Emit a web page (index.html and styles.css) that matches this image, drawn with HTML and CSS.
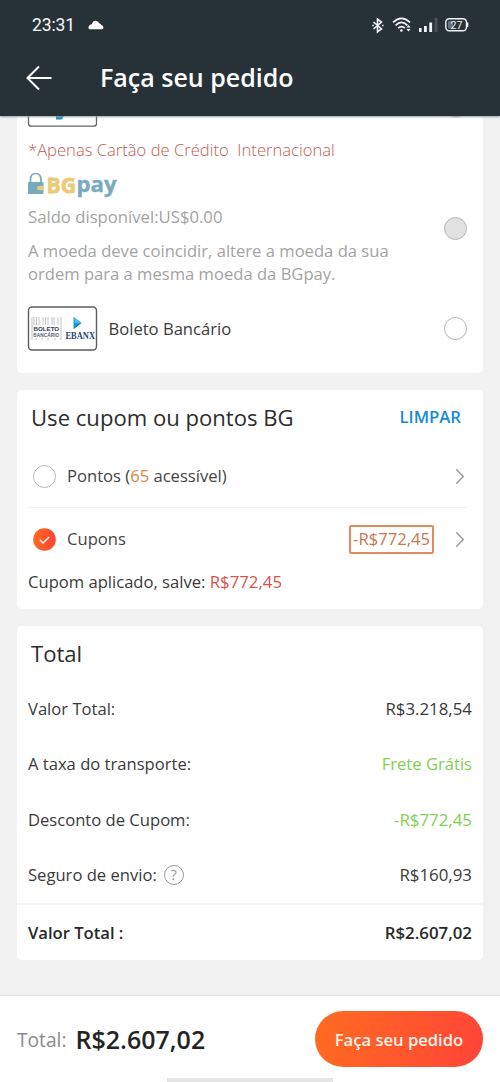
FILE: index.html
```html
<!DOCTYPE html>
<html lang="pt-BR">
<head>
<meta charset="utf-8">
<title>Faça seu pedido</title>
<link rel="stylesheet" href="styles.css">
</head>
<body>
<div class="screen">
  <header class="header">
    <div class="status">
      <span class="clock">23:31</span>
      <svg class="cloud" width="16" height="10" viewBox="0 0 16 10"><path fill="#fff" d="M2.500 9.300H14c2 0 2-3.500-.6-4.300C12.300 4 12 3.500 11 3 9 0 5 0 4 4 2.500 4.300.6 5.500.4 7.500c-.1 1.200.8 1.800 2.100 1.800z"/></svg>
      <div class="status-icons">
        <svg width="12" height="15" viewBox="0 0 12 15" fill="none" stroke="#f2f6f8" stroke-width="1.600"><path d="M1.500 4l8 7-4 3V1l4 3-8 7"/><path d="M.3 7.500h1.500M10 7.500h1.500" stroke-width="1.700"/></svg>
        <svg width="20" height="16" viewBox="0 0 20 16" fill="none" stroke="#f2f6f8" stroke-width="1.700"><path d="M1 5.400Q9.500-2.500 18 5.400M3.600 8.400Q9.500 2.500 15.400 8.400M6.200 11.200Q9.500 8 12.800 11.200"/><circle cx="9.400" cy="13.500" r="1.300" fill="#f2f6f8" stroke="none"/><path fill="#f2f6f8" stroke="none" d="M14.400 10.500L16.500 8l2.100 2.500zM14.400 12h4.200l-2.100 2.500z"/></svg>
        <svg width="19" height="15" viewBox="0 0 19 15" fill="#f2f6f8"><rect x="0" y="10" width="2.600" height="4"/><rect x="5" y="8" width="2.800" height="6"/><rect x="10.300" y="4.500" width="2.800" height="9.500"/><rect x="15.600" y="0" width="2.800" height="14" fill="#4a535a"/></svg>
        <svg width="24" height="14" viewBox="0 0 24 14"><rect x=".8" y=".8" width="20.700" height="12" rx="3.500" fill="none" stroke="#f2f6f8" stroke-width="1.400"/><rect x="3" y="3" width="5" height="7.700" rx="1.500" fill="#68737b"/><path d="M22.600 4.500v4.500" stroke="#f2f6f8" stroke-width="1.400"/><text x="11.400" y="10.600" text-anchor="middle" class="battery-text">27</text></svg>
      </div>
    </div>
    <div class="titlebar">
      <svg class="back" width="27" height="26" viewBox="0 0 27 26" fill="none" stroke="#fff" stroke-width="2"><path d="M25.500 13H2M13 1.500L1.500 13 13 24.500"/></svg>
      <h1>Faça seu pedido</h1>
    </div>
  </header>

  <main class="content">
    <section class="card payment">
      <svg class="clipped" width="439" height="11" viewBox="0 0 439 11"><path d="M.5 0v7.500q0 2.700 2.700 2.700h62.600q2.700 0 2.700-2.700V0" fill="#fff" stroke="#666" stroke-width="1.300"/><path d="M28 0h8l-2 3.500h-6z" fill="#158dc2"/><path d="M421 0q7 3.500 14 0z" fill="#e2bac1"/></svg>
      <p class="warning">*Apenas Cartão de Crédito&nbsp; Internacional</p>
      <div class="bgpay">
        <div class="bgpay-info">
          <svg class="bgpay-logo" width="92" height="25" viewBox="0 0 92 25"><path d="M2.500 12V8.500q0-6 5.200-6t5.200 6V12" fill="none" stroke="#77aabd" stroke-width="1.700"/><rect x="0" y="11" width="15.500" height="12" rx="1" fill="#77aabd"/><path d="M9 17q0-2 2-2h4.500v4.200H11q-2 0-2-2.200z" fill="#e9cc75"/><text x="18.500" y="22" class="logo-bg" textLength="29.500" lengthAdjust="spacingAndGlyphs">BG</text><text x="48.500" y="21" class="logo-pay" textLength="40" lengthAdjust="spacingAndGlyphs">pay</text></svg>
          <p class="balance">Saldo disponível:US$0.00</p>
          <p class="note">A moeda deve coincidir, altere a moeda da sua<br>ordem para a mesma moeda da BGpay.</p>
        </div>
        <span class="radio disabled"></span>
      </div>
      <div class="boleto">
        <svg width="70" height="45" viewBox="0 0 70 45"><rect x=".5" y="1" width="68" height="43" rx="3.500" fill="#fff" stroke="#5d5d5d" stroke-width="1.400"/><g stroke="#b5b4bd" stroke-width=".8"><path d="M4 11v23M6 11v8M8.500 11v8M11 11v8M15 11v8M17.500 11v8M20 11v8M24 11v8M26 11v8M30 11v8M33 11v23M8 32v2M14 32v2M20 32v2M27 32v2"/></g><text x="5.600" y="25" class="boleto-a" textLength="25.500">BOLETO</text><text x="5.200" y="30.500" class="boleto-b" textLength="26">BANCÁRIO</text><path d="M45.500 11l8 6-8 6z" fill="#129bd3"/><path d="M46 11l7.500 6H47z" fill="#55b9df"/><path d="M48 20l5.500-3-8 6z" fill="#154f8d"/><text x="37.500" y="32.500" class="ebanx" textLength="29.500" lengthAdjust="spacingAndGlyphs">EBANX</text></svg>
        <span class="method">Boleto Bancário</span>
        <span class="radio"></span>
      </div>
    </section>

    <section class="card discounts">
      <div class="card-head"><h2 class="use-title">Use cupom ou pontos BG</h2><a class="clear">LIMPAR</a></div>
      <div class="option points">
        <span class="radio"></span>
        <span class="option-label">Pontos (<b class="orange">65</b> acessível)</span>
        <svg class="chevron" width="10" height="17" viewBox="0 0 10 17"><path d="M1.300 1.300l7 7.200-7 7.200"/></svg>
      </div>
      <div class="option coupons">
        <svg class="checked" width="25" height="25" viewBox="0 0 25 25"><defs><linearGradient id="check-fill"><stop stop-color="#ff6a20"/><stop offset="1" stop-color="#ff4435"/></linearGradient></defs><circle cx="12.500" cy="12.500" r="11.300" fill="url(#check-fill)"/><path d="M7.800 12.800l3.200 3.200 6.200-6" fill="none" stroke="#fff" stroke-width="1.300"/></svg>
        <span class="option-label">Cupons</span>
        <span class="coupon-value">-R$772,45</span>
        <svg class="chevron" width="10" height="17" viewBox="0 0 10 17"><path d="M1.300 1.300l7 7.200-7 7.200"/></svg>
      </div>
      <p class="applied">Cupom aplicado, salve: <span class="red">R$772,45</span></p>
    </section>

    <section class="card totals">
      <h2 class="total-title">Total</h2>
      <div class="row"><span>Valor Total:</span><span class="amount">R$3.218,54</span></div>
      <div class="row"><span>A taxa do transporte:</span><span class="green">Frete Grátis</span></div>
      <div class="row"><span>Desconto de Cupom:</span><span class="amount green">-R$772,45</span></div>
      <div class="row"><span class="insurance">Seguro de envio:<i class="help">?</i></span><span class="amount">R$160,93</span></div>
      <div class="row grand"><span>Valor Total :</span><span class="amount">R$2.607,02</span></div>
    </section>
  </main>

  <footer class="footer">
    <span class="footer-label">Total:</span><span class="footer-price">R$2.607,02</span>
    <button class="order">Faça seu pedido</button>
    <span class="home-indicator"></span>
  </footer>
</div>
</body>
</html>
```

FILE: styles.css
```css
* { box-sizing: border-box; }
body { margin: 0; font-family: "Open Sans", "Noto Sans", sans-serif; font-size: 16.600px; color: #3a3a3a; background: #f2f2f2; }
h1, h2, p { margin: 0; white-space: nowrap; }
svg { display: block; flex: none; overflow: visible; }
.screen { width: 500px; height: 1082px; display: flex; flex-direction: column; overflow: hidden; }
.header { height: 116px; flex: none; background: #273238; color: #fff; box-shadow: 0 1px 2px #9a9fa2; z-index: 1; }
.status { height: 50px; padding: 0 31px 0 32px; display: flex; align-items: center; }
.clock { font-family: Roboto, sans-serif; font-size: 17.500px; letter-spacing: -.1px; width: 56px; color: #f5f8f9; }
.cloud { margin-top: -1px; }
.status-icons { margin-left: auto; display: flex; align-items: center; gap: 7px; }
.status-icons svg:nth-child(1) { margin-right: 1px; }
.battery-text { font: 10.500px Roboto, sans-serif; fill: #f2f6f8; }
.titlebar { height: 56px; padding-left: 26px; display: flex; align-items: center; }
.titlebar h1 { margin-left: 47px; font-size: 25px; font-weight: 550; line-height: 32px; padding-bottom: 2px; }
.content { height: 879px; flex: none; display: flex; flex-direction: column; gap: 17px; }
.card { width: 466px; margin: 0 17px; background: #fff; border-radius: 5px; flex: none; }
.payment { height: 257px; padding: 0 16px 0 11px; border-radius: 0 0 5px 5px; }
.warning { margin-top: 12px; line-height: 22px; font-weight: 330; color: #c15d54; }
.bgpay { height: 124px; display: flex; align-items: center; justify-content: space-between; }
.bgpay-info { padding-top: 10px; }
.logo-bg { font: bold 21px "Open Sans", sans-serif; fill: #eacb78; stroke: #eacb78; stroke-width: .8; }
.logo-pay { font: bold 22px "Open Sans", sans-serif; fill: #78abc0; stroke: #78abc0; stroke-width: .4; }
.balance { margin-top: 9px; line-height: 24px; font-size: 16.700px; color: #a3a3a3; }
.note { margin-top: 10px; line-height: 23px; color: #a3a3a3; }
.bgpay .radio { margin-top: 11px; }
.radio { width: 23px; height: 23px; border: 1.500px solid #b5b5b5; border-radius: 50%; background: #fff; flex: none; }
.radio.disabled { background: #e1e1e1; }
.boleto { height: 45px; margin-top: 21px; display: flex; align-items: center; }
.boleto .method { margin-left: 10.500px; }
.boleto .radio { margin-left: auto; }
.boleto-a { font: bold 6.200px "Liberation Sans", sans-serif; fill: #333a54; }
.boleto-b { font: bold 4.700px "Liberation Sans", sans-serif; fill: #555b70; }
.ebanx { font: bold 9.500px "Liberation Serif", serif; fill: #234674; }
.discounts { height: 219px; padding: 0 16px 0 11px; }
.card-head { height: 55px; padding: 0 6px 2px 3px; display: flex; align-items: center; justify-content: space-between; }
h2 { font-size: 22.100px; font-weight: 400; color: #2d2d2d; }
.clear { color: #158bd4; font-size: 16.700px; font-weight: 550; }
.option { display: flex; align-items: center; padding: 0 2px 0 5px; }
.points { height: 63px; border-bottom: 1px solid #f2f2f2; }
.coupons { height: 63px; padding-left: 4px; }
.option-label { margin-left: 11px; color: #444; padding-bottom: 2px; }
.coupons .option-label { margin-left: 10px; }
.orange { font-weight: 400; color: #d98548; }
.chevron { margin-left: auto; fill: none; stroke: #999; stroke-width: 1.400; }
.coupon-value { margin-left: auto; width: 85px; height: 29px; border: 2px solid #df8a61; border-radius: 2px; color: #c97650; padding-bottom: 2px; display: flex; align-items: center; justify-content: center; }
.coupons .chevron { margin-left: 21px; }
.applied { line-height: 24px; margin-top: -1px; }
.red { color: #d9534a; font-size: 16.800px; }
.totals { height: 334px; overflow: hidden; }
.total-title { height: 55px; line-height: 55px; padding-left: 14px; }
.row { height: 55.500px; padding: 0 11px 1px; display: flex; align-items: center; justify-content: space-between; }
.amount { font-size: 16.850px; }
.green { color: #81d052; }
.insurance { display: flex; align-items: center; }
.help { width: 20px; height: 20px; margin-left: 7px; border: 1.300px solid #999; border-radius: 50%; display: flex; align-items: center; justify-content: center; font-size: 14px; font-style: normal; color: #999; }
.grand { height: 57px; border-top: 2px solid #f6f6f6; font-weight: 600; color: #292929; }
.footer { height: 87px; position: relative; flex: none; border-top: 1px solid #e2e2e2; background: #fff; display: flex; align-items: center; padding: 0 17px; }
.footer-label { font-size: 19.200px; color: #8a8a8a; }
.footer-price { margin-left: 9px; font-size: 25px; font-weight: 550; color: #242424; }
.order { margin-left: auto; width: 168px; height: 56px; border: 0; border-radius: 28px; padding: 0; background: linear-gradient(105deg, #ff6c21, #ff4438); color: #fff1e7; font: 600 16.600px "Open Sans", sans-serif; }
.home-indicator { position: absolute; left: 167px; bottom: 0; width: 166px; height: 4px; background: #e5e5e5; }
```
